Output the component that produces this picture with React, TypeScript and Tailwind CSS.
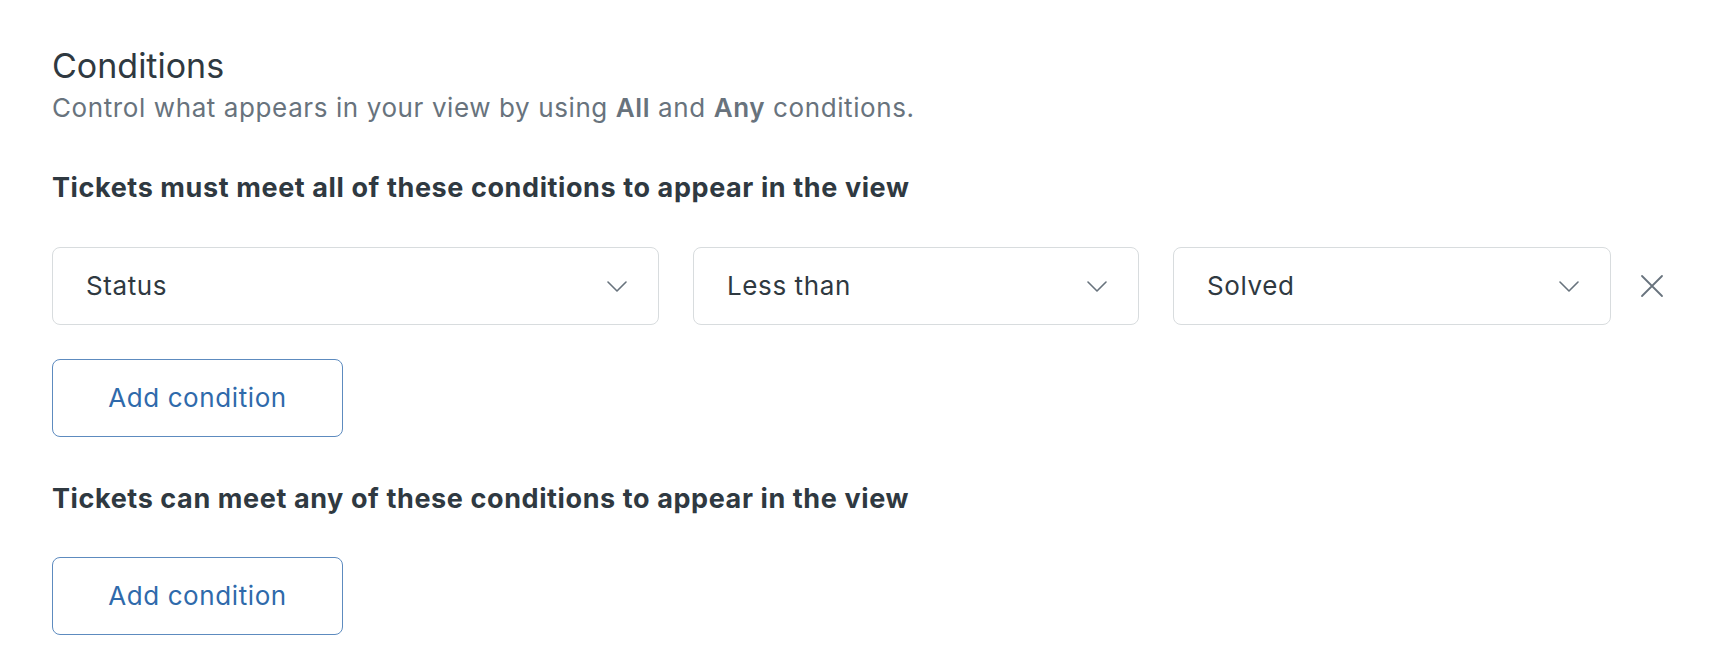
type Field = { label: string; width: string };

const fields: Field[] = [
  { label: 'Status', width: 'w-[607px]' },
  { label: 'Less than', width: 'w-[446px]' },
  { label: 'Solved', width: 'w-[438px]' },
];

function Chevron() {
  return (
    <svg width="20" height="11" viewBox="0 0 20 11" fill="none" className="shrink-0">
      <polyline
        points="1,1 10,10 19,1"
        stroke="#68737d"
        strokeWidth="1.6"
        strokeLinecap="round"
        strokeLinejoin="round"
      />
    </svg>
  );
}

function CloseIcon() {
  return (
    <svg width="24" height="24" viewBox="0 0 24 24" fill="none">
      <path d="M2 2L22 22M22 2L2 22" stroke="#68737d" strokeWidth="1.8" strokeLinecap="round" />
    </svg>
  );
}

function SelectBox({ label, width }: Field) {
  return (
    <div
      className={`${width} h-[78px] flex items-center justify-between pl-[33px] pr-[31px] rounded-[8px] border-[1.5px] border-[#d8dcde] bg-white`}
    >
      <span className="text-[26px] leading-[32px] tracking-[0.6px] text-[#2f3941]">{label}</span>
      <Chevron />
    </div>
  );
}

function AddConditionButton() {
  return (
    <button className="w-[291px] h-[78px] flex items-center justify-center rounded-[8px] border-[1.5px] border-[#5d8bbf] bg-white text-[26px] leading-[32px] tracking-[0.6px] text-[#2f6aab]">
      Add condition
    </button>
  );
}

export default function App() {
  return (
    <div
      className="min-h-screen bg-white pt-[46px] px-[52px]"
      style={{ fontFamily: 'Inter, "Noto Sans", sans-serif' }}
    >
      {/* Header */}
      <h1 className="text-[34px] leading-[40px] font-normal text-[#2f3941]">Conditions</h1>
      <p className="mt-[6px] text-[26px] leading-[32px] tracking-[0.6px] text-[#68737d]">
        Control what appears in your view by using{' '}
        <span className="font-semibold">All</span> and{' '}
        <span className="font-semibold">Any</span> conditions.
      </p>

      {/* All conditions */}
      <h2 className="mt-[48px] text-[27px] leading-[32px] font-bold tracking-[0.6px] text-[#2f3941]">
        Tickets must meet all of these conditions to appear in the view
      </h2>
      <div className="mt-[43px] flex items-center">
        <div className="flex items-center gap-[34px]">
          {fields.map((f) => (
            <SelectBox key={f.label} {...f} />
          ))}
        </div>
        <button className="ml-[29px] text-[#68737d]">
          <CloseIcon />
        </button>
      </div>
      <div className="mt-[34px]">
        <AddConditionButton />
      </div>

      {/* Any conditions */}
      <h2 className="mt-[46px] text-[27px] leading-[32px] font-bold tracking-[0.6px] text-[#2f3941]">
        Tickets can meet any of these conditions to appear in the view
      </h2>
      <div className="mt-[42px]">
        <AddConditionButton />
      </div>
    </div>
  );
}
